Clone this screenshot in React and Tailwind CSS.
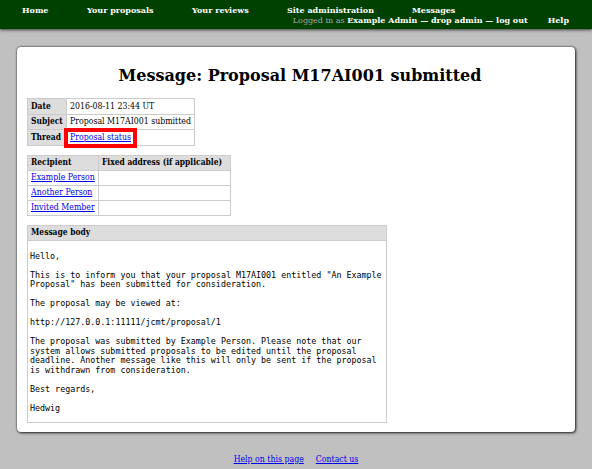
import React from 'react';

const serif = { fontFamily: '"DejaVu Serif", serif' };
const condensed = { fontFamily: '"DejaVu Serif Condensed", "DejaVu Serif", serif', fontStretch: 'condensed' };

const navItems = [
  { label: 'Home', cls: 'w-[65px]' },
  { label: 'Your proposals', cls: 'w-[105px]' },
  { label: 'Your reviews', cls: 'w-[95px]' },
  { label: 'Site administration', cls: 'w-[125px]' },
  { label: 'Messages', cls: '' },
];

const recipients = ['Example Person', 'Another Person', 'Invited Member'];

const body = `Hello,

This is to inform you that your proposal M17AI001 entitled "An Example
Proposal" has been submitted for consideration.

The proposal may be viewed at:

http://127.0.0.1:11111/jcmt/proposal/1

The proposal was submitted by Example Person. Please note that our
system allows submitted proposals to be edited until the proposal
deadline. Another message like this will only be sent if the proposal
is withdrawn from consideration.

Best regards,

Hedwig`;

const Link = ({ children }) => (
  <a href="#" className="text-[#0000ee] underline">{children}</a>
);

const th = 'bg-[#dddddd] border border-[#cccccc] text-left font-bold text-[8.4px] px-[3px] py-0 whitespace-nowrap';
const td = 'border border-[#cccccc] px-[3px] py-0 whitespace-nowrap';

export default function App() {
  return (
    <div
      className="w-[592px] h-[469px] bg-[#c0c0c0] text-black text-[8.7px] leading-[11px] overflow-hidden"
      style={serif}
    >
      {/* Nav bar */}
      <div className="h-[29px] bg-[#004000] text-white font-bold text-[8px] leading-[10px] shadow-[0_1px_3px_rgba(0,0,0,0.7)] relative z-10">
        <div className="flex pt-[4.5px] pl-[22px] h-[14.5px]">
          {navItems.map((item) => (
            <span key={item.label} className={`whitespace-nowrap ${item.cls}`}>{item.label}</span>
          ))}
        </div>
        <div className="flex justify-end pr-[23px] h-[10px]">
          <span className="whitespace-nowrap">
            <span className="font-normal text-[#a8a8a8]">Logged in as </span>
            Example Admin — drop admin — log out
          </span>
          <span className="ml-[20px]">Help</span>
        </div>
      </div>

      {/* Main panel */}
      <div className="mt-[18px] ml-[17px] w-[558px] h-[385px] bg-white rounded-[4px] shadow-[0_0_2px_rgba(0,0,0,0.8),1px_1px_3px_rgba(0,0,0,0.75)] px-[10px]">
        <h1 className="text-center font-bold text-[16px] leading-[20px] pt-[19px] pl-[8px]">
          Message: Proposal M17AI001 submitted
        </h1>

        <div style={condensed}>
          <table className="mt-[12px] border-collapse table-fixed w-[167px]">
            <colgroup>
              <col className="w-[39px]" />
              <col className="w-[128px]" />
            </colgroup>
            <tbody>
              <tr className="h-[15.5px]">
                <th className={th}>Date</th>
                <td className={td}>2016-08-11 23:44 UT</td>
              </tr>
              <tr className="h-[15.5px]">
                <th className={th}>Subject</th>
                <td className={td}>Proposal M17AI001 submitted</td>
              </tr>
              <tr className="h-[15.5px]">
                <th className={th}>Thread</th>
                <td className={`${td} relative`}>
                  <Link>Proposal status</Link>
                  <span className="absolute left-[-3px] top-[-2px] w-[73px] h-[19.5px] border-4 border-[#ff0000]" />
                </td>
              </tr>
            </tbody>
          </table>

          <table className="mt-[9px] border-collapse table-fixed w-[203px]">
            <colgroup>
              <col className="w-[71px]" />
              <col className="w-[132px]" />
            </colgroup>
            <tbody>
              <tr className="h-[15.2px]">
                <th className={th}>Recipient</th>
                <th className={th}>Fixed address (if applicable)</th>
              </tr>
              {recipients.map((r) => (
                <tr key={r} className="h-[15px]">
                  <td className={td}><Link>{r}</Link></td>
                  <td className={td}></td>
                </tr>
              ))}
            </tbody>
          </table>

          <div className="mt-[9px] w-[360px] h-[198px] border border-[#cccccc]">
            <div className="bg-[#dddddd] border-b border-[#cccccc] h-[15px] px-[3px] pt-[1.5px] font-bold text-[8.4px]">
              Message body
            </div>
            <pre
              className="px-[2px] pt-[11px] text-[8.35px] leading-[9.5px]"
              style={{ fontFamily: '"DejaVu Sans Mono", monospace' }}
            >
              {body}
            </pre>
          </div>
        </div>
      </div>

      {/* Footer */}
      <div className="flex justify-center gap-[12px] mt-[22px]" style={condensed}>
        <Link>Help on this page</Link>
        <Link>Contact us</Link>
      </div>
    </div>
  );
}
